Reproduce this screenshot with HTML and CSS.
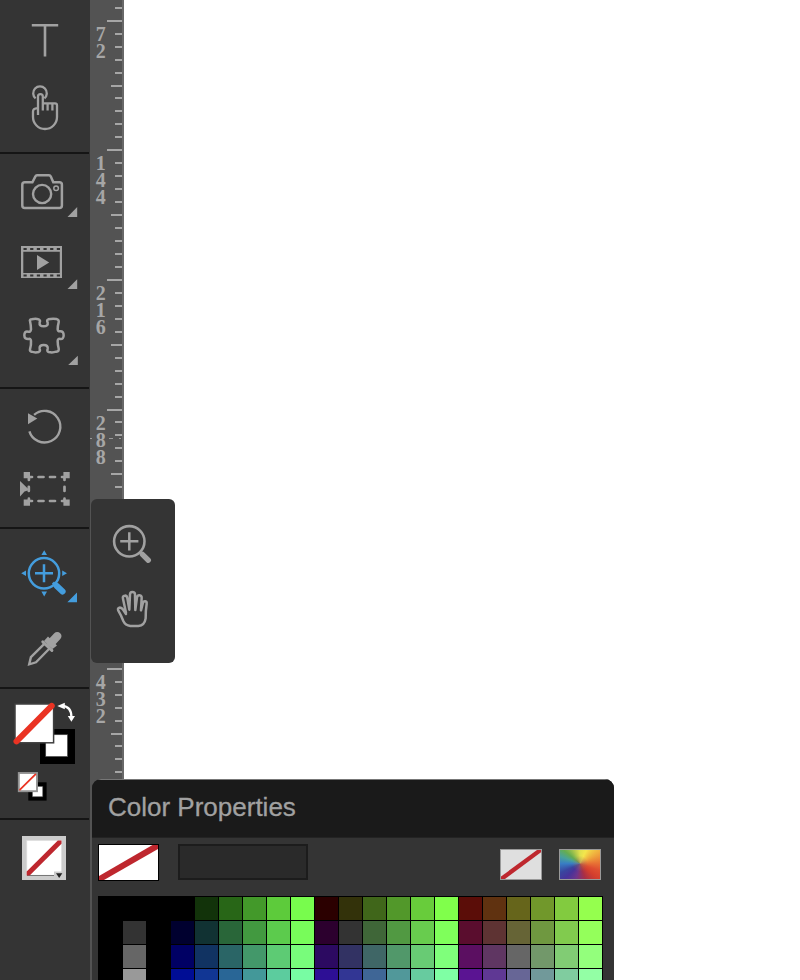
FILE: index.html
```html
<!DOCTYPE html>
<html lang="en">
<head>
<meta charset="utf-8">
<title>Color Properties</title>
<link rel="stylesheet" href="styles.css">
</head>
<body>
<div class="app">
  <nav class="toolbar">
    <section class="group">
      <svg class="tool" viewBox="0 0 90 74" height="74"><path d="M33.1 26.6V25.2H56.9V26.6M45 25V56.5" stroke-width="2.6"/></svg>
      <svg class="tool" viewBox="0 74 90 78" height="78"><path d="M35.6 98.4a6.8 6.8 0 1 1 8.8 0M38 115V96.6a2.4 2.4 0 0 1 4.8 0V110.5M43 103.3H55a2 2 0 0 1 2 2V117a12 12 0 0 1-24 0V111.5q0-3 4.5-3.3M47.6 103.5V110.5M52.4 103.5V110.5" stroke-width="2.3"/></svg>
    </section>
    <section class="group">
      <svg class="tool" viewBox="0 154 90 72" height="72"><path d="M24.8 182.3H32.4L35.4 176.4Q35.9 175.3 37 175.3H49Q50.3 175.3 50.8 176.4L53.3 182.3H59.4a2.5 2.5 0 0 1 2.5 2.5V205.4a2.5 2.5 0 0 1-2.5 2.5H24.8a2.5 2.5 0 0 1-2.5-2.5V184.8a2.5 2.5 0 0 1 2.5-2.5Z" stroke-width="2.5"/><circle cx="42.1" cy="194" r="9.1" stroke-width="2.4"/><circle cx="56.1" cy="188.2" r="2.3" stroke-width="1.5"/><path class="solid" d="M77.2 207V217H67.5Z"/></svg>
      <svg class="tool" viewBox="0 226 90 72" height="72"><path class="solid" fill-rule="evenodd" d="M21 246H62V278H21ZM23.3 251.7V273H59.8V251.7Z"/><path class="holes" d="M23.5 249H60M23.5 275.5H60"/><path class="solid" d="M37 255L49.2 262.6L37 270Z"/><path class="solid" d="M77.2 279.3V289H67.5Z"/></svg>
      <svg class="tool" viewBox="0 298 90 89" height="89"><g transform="translate(0 300) scale(.3333)"><path stroke-width="7.5" d="M90 63Q88 59 95 58Q107 55 116 58Q122 61 119 67Q117 79 131 79Q145 79 143 68Q139 60 145 58Q157 55 169 57Q178 59 176 67Q173 78 173 88Q174 95 180 94Q191 93 191 106Q191 118 181 117Q173 115 173 123Q173 134 176 145Q178 154 169 155Q157 159 146 156Q140 154 143 147Q145 135 131 135Q117 135 119 147Q122 153 116 156Q106 159 94 155Q89 154 90 148Q94 136 93 123Q92 115 86 117Q73 118 73 106Q73 93 84 95Q92 97 93 88Q93 76 90 63Z"/></g><path class="solid" d="M77.8 355.7V365H68.2Z"/></svg>
    </section>
    <section class="group">
      <svg class="tool" viewBox="0 389 90 71" height="71"><path d="M29.4 431.3A15.8 15.8 0 1 0 34.1 414.8" stroke-width="2.4"/><path class="solid" d="M28 413.3L37.3 418.6L28 424.3Z"/></svg>
      <svg class="tool" viewBox="0 460 90 67" height="67"><path class="solid" d="M23.7 472H30V478.3H23.7ZM63.4 472H69.7V478.3H63.4ZM23.7 499.4H30V505.8H23.7ZM63.4 499.4H69.7V505.8H63.4ZM20 481L29.3 490L24.5 491.4L20 496.4Z"/><path stroke-width="2.7" stroke-linecap="round" d="M28.9 477V480M30 477H32M64.5 477V480M62 477H64.5M28.9 500.8V498.7M30 501H32M64.5 501V498.7M62 501H64.5M38.5 477H43.5M50 477H55M38.5 501H43.5M50 501H55M64.5 486.8V491M28.8 486.8V491"/></svg>
    </section>
    <section class="group">
      <svg class="tool active" viewBox="0 529 90 89" height="89"><circle cx="44" cy="573.3" r="15.2" stroke-width="2.5"/><path d="M35 573.3H53M44 564.3V582.3" stroke-width="2.5"/><path d="M53 582.5L56 585.5" stroke-width="3"/><path d="M56.8 586L62.6 591.5" stroke-width="6" stroke-linecap="round"/><path class="solid" d="M44.2 550.2L47 555H41.4ZM41.4 591.6H47L44.2 596.5ZM21.2 573.3L26 570.5V576.1ZM67 573.3L62.2 570.5V576.1ZM77 592.4V602.2H67.3Z"/></svg>
      <svg class="tool" viewBox="0 618 90 69" height="69"><path stroke-width="8.4" stroke-linecap="round" d="M57.3 636.2L51 642.8"/><path class="solid" d="M44 641L48 636.5L57 645.5L52.5 649Z"/><path stroke-width="3" stroke-linecap="round" d="M42.8 641.8L51.9 650.4"/><path stroke-width="2.4" d="M44.3 643.8L30.9 657.2L29.2 664.3L36 662.3L49.5 648.5"/></svg>
    </section>
    <section class="group">
      <svg class="tool" viewBox="0 689 90 129" height="129">
        <rect class="ink" x="40" y="729" width="35" height="35"/><rect class="paper" x="45.7" y="734.7" width="21.9" height="21.9" stroke="#444" stroke-width=".7"/>
        <rect class="paper" x="15" y="704" width="38.6" height="38.8" stroke="#3f3f3f" stroke-width="1.5"/><path class="none" d="M16.5 741.3L51.7 705.9" stroke-width="6"/>
        <path class="swap" d="M62 705.9Q71.4 706.4 71.4 717"/><path class="paper" d="M57.3 706L64.8 702.8V709.2ZM71.4 721.8L67.8 715.9H75Z"/>
        <rect class="ink" x="28.3" y="782.3" width="18.3" height="18.3"/><rect class="paper" x="32.3" y="786.3" width="10.5" height="10.5" stroke="#444" stroke-width=".6"/>
        <rect class="paper" x="18.8" y="773" width="18.2" height="18.2" stroke="#939393" stroke-width="1.9"/><path class="none thin" d="M20 789.7L35.4 774.4"/>
      </svg>
    </section>
    <section class="group">
      <svg class="tool" viewBox="0 820 90 160" height="160"><path fill="#ccc" stroke="none" d="M22 836H66V880H22Z"/><rect class="paper" x="26.8" y="840.5" width="34.7" height="34.7" stroke="#ddd" stroke-width=".7"/><path d="M27 875.5H54" stroke="#777" stroke-width="1"/><path d="M26.7 871.5L57.8 840.5H61.5V843.8L29.7 875.5H26.7Z" fill="#be272e" stroke="none"/><path fill="#ccc" stroke="none" d="M54 871.5H62V877H54Z"/><path fill="#222" stroke="none" d="M56 873.2H62.3L59.2 878Z"/></svg>
    </section>
  </nav>
  <svg class="ruler" id="ruler" viewBox="0 0 34 980" width="34" height="980"></svg>
  <main class="canvas"></main>
</div>

<aside class="flyout">
  <svg viewBox="91 499 84 82" width="84" height="82"><circle cx="129.3" cy="541.3" r="15.2" stroke-width="2.6"/><path d="M120.2 541.3H138.4M129.3 532.2V550.4" stroke-width="2.5"/><path d="M140 552L142 554" stroke-width="3"/><path stroke-width="5.4" stroke-linecap="round" d="M142.4 554.4L148.3 560.2"/></svg>
  <svg viewBox="91 581 84 82" width="84" height="82"><g transform="translate(0 570) scale(.3333)"><path stroke-width="7.5" stroke-linejoin="round" stroke-linecap="round" d="M378 128L369 86Q367 78 374 77Q380 76 382 84L388 119L390 74Q390 66 397 66Q405 66 405 73L406 120L411 82Q413 75 419 76Q426 77 425 84L423 121L429 98Q431 93 436 94Q441 95 440 102Q437 121 437 145Q434 166 415 168H391Q376 166 370 153Q364 137 355 122Q352 115 358 113Q365 112 369 119L378 132"/></g></svg>
</aside>

<section class="panel">
  <header class="panel-title">Color Properties</header>
  <div class="controls">
    <svg class="current" viewBox="0 0 59 35"><path d="M0 31L53.5 0H59V4L5 35H0Z"/></svg>
    <div class="field"></div>
    <svg class="clear" viewBox="0 0 40 29"><path d="M0 26.5L36 0H40V2.3L4 29H0Z"/></svg>
    <div class="wheel"></div>
  </div>
  <div class="swatches" id="swatches"></div>
</section>
<script src="app.js"></script>
</body>
</html>
```
FILE: styles.css
```css
* { box-sizing: border-box; }
body { margin: 0; width: 800px; height: 980px; overflow: hidden; background: #fff; position: relative; font-family: "Liberation Sans", Arial, sans-serif; }
.app { display: flex; height: 980px; }
.toolbar { width: 90px; flex: none; background: #343434; }
.group { width: 89px; }
.group + .group { border-top: 2px solid #151515; }
.tool { display: block; width: 90px; fill: none; stroke: #a1a1a1; }
.solid { fill: #a1a1a1; stroke: none; }
.active { stroke: #449ddd; }
.active .solid { fill: #449ddd; }
.holes { stroke: #343434; stroke-width: 1.8; stroke-dasharray: 3.2 3.46; }
.ink { fill: #000; stroke: none; }
.paper { fill: #fff; }
path.paper { stroke: none; }
.none { stroke: #ea3323; stroke-linecap: round; }
.thin { stroke-width: 1.8; }
.swap { stroke: #fff; stroke-width: 2.3; }
.ruler { flex: none; background: #535353; }
.ruler text { font: bold 20px "Liberation Serif", "Times New Roman", serif; fill: #a6a6a6; writing-mode: vertical-rl; text-orientation: upright; letter-spacing: -5px; }
.tick { fill: #a6a6a6; }
.edge { fill: #686868; }
.guide { fill: #999; }
.canvas { flex: 1; background: #fff; }
.flyout { position: absolute; left: 91px; top: 499px; width: 84px; height: 164px; background: #343434; border-radius: 6px; overflow: hidden; }
.flyout svg { display: block; fill: none; stroke: #a1a1a1; }
.panel { position: absolute; left: 92px; top: 779px; width: 522px; height: 201px; background: #343434; border-radius: 9px 9px 0 0; overflow: hidden; }
.panel-title { height: 59px; background: #1a1a1a; border-top: 1px solid #777; border-bottom: 1px solid #232323; color: #a1a1a1; font-size: 26px; line-height: 54px; padding-left: 16px; white-space: nowrap; -webkit-text-stroke: .3px #a1a1a1; }
.controls { display: flex; align-items: flex-start; height: 58px; padding: 6px 13px 0 6px; }
.current { width: 61px; height: 37px; border: 1px solid #000; background: #fff; fill: #be272e; }
.field { width: 130px; height: 36px; margin: 0 auto 0 19px; border: 2px solid #1c1c1c; background: #2a2a2a; }
.clear { width: 42px; height: 31px; margin: 5px 17px 0 0; border: 1px solid #999; background: #dfdfdf; fill: #be272e; }
.wheel { width: 42px; height: 31px; margin-top: 5px; border: 1px solid #999; background: radial-gradient(circle at 50% 47%, rgba(150, 110, 95, .6), transparent 8px), conic-gradient(from 0deg at 50% 47%, #dfe04f, #f4e64c 25deg, #efaa3d 60deg, #e97835 85deg, #de4d30 110deg, #d43e2d 130deg, #a92f45 160deg, #6d348b 195deg, #46339a 225deg, #39459f 245deg, #387dc4 270deg, #48a29b 290deg, #65ac50 310deg, #abc64c 335deg, #dfe04f 360deg); }
.swatches { display: grid; grid-template-columns: repeat(21, 23px); grid-auto-rows: 23px; gap: 1px; width: 505px; height: 100px; margin-left: 6px; padding: 1px; background: #000; }
```
FILE: app.js
```js
const NS = 'http://www.w3.org/2000/svg';
const ruler = document.getElementById('ruler');
function add(tag, attrs, text) {
  const node = document.createElementNS(NS, tag);
  for (const key in attrs) node.setAttribute(key, attrs[key]);
  if (text) node.textContent = text;
  ruler.appendChild(node);
}
add('rect', { class: 'edge', x: 32, y: 0, width: 2, height: 980 });
for (let i = -1; i < 60; i++) {
  const len = i % 10 === 0 ? 15 : i % 5 === 0 ? 11 : 7;
  add('rect', { class: 'tick', x: 32 - len, y: Math.floor(20.2 + i * 12.96), width: len, height: 2 });
}
[[72, 34], [144, 163], [216, 293], [288, 423], [432, 682]].forEach(([value, y]) => {
  add('text', { x: 10.8, y: y - 11 }, String(value));
});
[[0, 2], [19, 4], [29, 2]].forEach(([x, width]) => add('rect', { class: 'guide', x, y: 438, width, height: 1 }));

const rows = [
  '000000 000000 000000 000000 12330a 286617 43992a 5dcb3b 78fc4d 2b0000 33320a 40661a 52982a 68cc3b 80ff4b 5b0d08 603210 66651b 71982b 82cb3f 95ff4e',
  '000000 333333 000000 00002f 113233 296639 429940 5ccb4d 78fc5a 2c002e 333333 3f6638 519942 68cc4e 7fff5b 5a0d2e 5e3333 666436 6f9840 81cb4e 94ff5b',
  '000000 666666 000000 000064 113362 2a6566 43986a 5dcb74 78fc7b 2c0a61 323263 3f6666 51986a 68cb74 7fff7b 5b0f61 5f3662 666666 72986a 81cc74 93ff7c',
  '000000 999999 000000 000d95 113694 296696 439899 5ccc9e 78fca3 2d0f95 323694 3f6696 51989a 67cb9f 7fffa4 5a1492 5f3894 676696 71999a 80cc9f 93ffa5'
];
const swatches = document.getElementById('swatches');
rows.forEach(row => row.split(' ').forEach(color => {
  const cell = document.createElement('div');
  cell.style.background = '#' + color;
  swatches.appendChild(cell);
}));
```
